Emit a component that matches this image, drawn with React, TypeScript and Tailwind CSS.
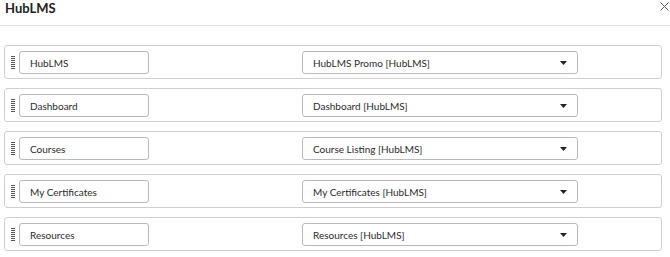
import React from 'react';

const rows = [
  { label: 'HubLMS', page: 'HubLMS Promo [HubLMS]' },
  { label: 'Dashboard', page: 'Dashboard [HubLMS]' },
  { label: 'Courses', page: 'Course Listing [HubLMS]' },
  { label: 'My Certificates', page: 'My Certificates [HubLMS]' },
  { label: 'Resources', page: 'Resources [HubLMS]' },
];

const Grip = () => (
  <div className="flex flex-col gap-[1px] w-[4px]">
    {Array.from({ length: 7 }).map((_, i) => (
      <div key={i} className="h-[1px] w-[4px] bg-[#555]" />
    ))}
  </div>
);

const App: React.FC = () => {
  return (
    <div className="w-[670px] h-[257px] bg-white text-[#2a2a2a] font-['Lato','Noto_Sans',sans-serif] overflow-hidden">
      {/* Header */}
      <div className="flex items-start justify-between h-[26px] border-b border-[#e2e2e2] pl-[5px] pr-[1px]">
        <h1 className="text-[13px] font-bold leading-[14px] pt-[1px] text-[#222]">HubLMS</h1>
        <button className="text-[#555] mt-[2px]">
          <svg width="9" height="9" viewBox="0 0 9 9" stroke="currentColor" strokeWidth="1">
            <path d="M0.5 0.5L8.5 8.5M8.5 0.5L0.5 8.5" />
          </svg>
        </button>
      </div>

      {/* Menu rows */}
      <div className="flex flex-col gap-[9px] pt-[19px] pl-[4px] w-[662px]">
        {rows.map((row) => (
          <div
            key={row.label}
            className="flex items-center h-[34px] border border-[#cfcfcf] rounded-[3px] pl-[6px]"
          >
            <Grip />
            <div className="ml-[4px] w-[130px] h-[23px] flex items-center border border-[#b9b9b9] rounded-[3px] pl-[10px] pt-[2px] text-[10px]">
              {row.label}
            </div>
            <div className="ml-[153px] w-[276px] h-[23px] flex items-center justify-between border border-[#b9b9b9] rounded-[3px] pl-[10px] pr-[10px] pt-[2px] text-[10px]">
              <span>{row.page}</span>
              <svg width="7" height="4" viewBox="0 0 7 4">
                <path d="M0 0H7L3.5 4Z" fill="#222" />
              </svg>
            </div>
          </div>
        ))}
      </div>
    </div>
  );
};

export default App;
